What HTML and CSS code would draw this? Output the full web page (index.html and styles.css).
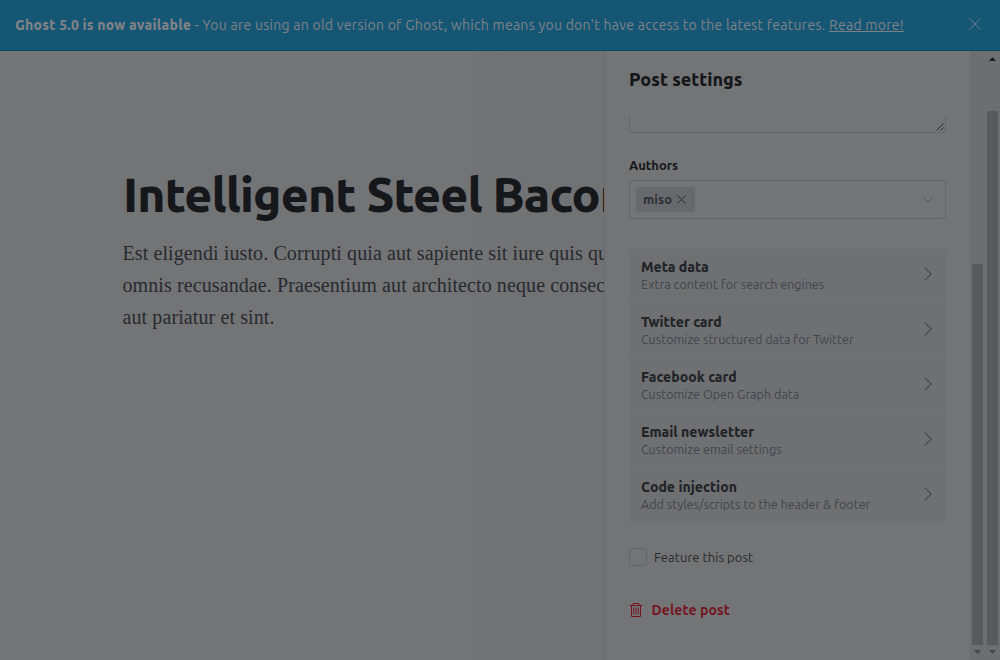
FILE: index.html
```html
<!DOCTYPE html>
<html lang="en">
<head>
<meta charset="utf-8">
<title>Post settings</title>
<link rel="stylesheet" href="styles.css">
</head>
<body>
<div class="app">
  <header class="alert">
    <p class="alert-text"><strong>Ghost 5.0 is now available</strong> - You are using an old version of Ghost, which means you don't have access to the latest features. <a class="alert-link">Read more!</a></p>
    <svg class="alert-close" viewBox="0 0 12 12"><path d="M.3.3l11.4 11.4M11.7.3.3 11.7"/></svg>
  </header>
  <div class="workspace">
    <main class="editor">
      <h1 class="title">Intelligent Steel Bacon</h1>
      <p class="body-copy">Est eligendi iusto. Corrupti quia aut sapiente sit iure quis qu<br>omnis recusandae. Praesentium aut architecto neque consec<br>aut pariatur et sint.</p>
    </main>
    <aside class="settings">
      <h2 class="settings-title">Post settings</h2>
      <div class="textarea-end"><svg class="grip" viewBox="0 0 8 8"><path d="M.5 7.5l7-7M4.5 7.5l3-3"/></svg></div>
      <div class="field-label">Authors</div>
      <div class="select">
        <span class="token"><span class="token-name">miso</span><svg class="token-close" viewBox="0 0 9 9"><path d="M.4.4l8.2 8.2M8.6.4.4 8.6"/></svg></span>
        <svg class="caret" viewBox="0 0 10 6"><path d="M.5.5 5 5 9.5.5"/></svg>
      </div>
      <nav class="menu">
        <div class="item"><div><div class="item-name">Meta data</div><div class="item-desc">Extra content for search engines</div></div><svg class="chevron" viewBox="0 0 8 14"><path d="M.7.6 7.2 7 .7 13.4"/></svg></div>
        <div class="item"><div><div class="item-name">Twitter card</div><div class="item-desc">Customize structured data for Twitter</div></div><svg class="chevron" viewBox="0 0 8 14"><path d="M.7.6 7.2 7 .7 13.4"/></svg></div>
        <div class="item"><div><div class="item-name">Facebook card</div><div class="item-desc">Customize Open Graph data</div></div><svg class="chevron" viewBox="0 0 8 14"><path d="M.7.6 7.2 7 .7 13.4"/></svg></div>
        <div class="item"><div><div class="item-name">Email newsletter</div><div class="item-desc">Customize email settings</div></div><svg class="chevron" viewBox="0 0 8 14"><path d="M.7.6 7.2 7 .7 13.4"/></svg></div>
        <div class="item"><div><div class="item-name">Code injection</div><div class="item-desc">Add styles/scripts to the header &amp; footer</div></div><svg class="chevron" viewBox="0 0 8 14"><path d="M.7.6 7.2 7 .7 13.4"/></svg></div>
      </nav>
      <div class="feature"><span class="checkbox"></span><span class="feature-text">Feature this post</span></div>
      <div class="delete"><svg class="trash" viewBox="0 0 14 14"><path d="M.5 2.5h13M4 2.3V.5h6v1.8M2.5 2.7v10.8h9V2.7M4.7 4.5v7M7 4.5v7M9.3 4.5v7"/></svg><span class="delete-text">Delete post</span></div>
    </aside>
    <div class="scrollbar inner"><div class="thumb"></div><svg class="arrow" viewBox="0 0 7 4"><path d="M0 0h7L3.5 4z"/></svg></div>
    <div class="scrollbar outer"><svg class="arrow up" viewBox="0 0 7 4"><path d="M0 4h7L3.5 0z"/></svg><div class="thumb"></div><svg class="arrow" viewBox="0 0 7 4"><path d="M0 0h7L3.5 4z"/></svg></div>
  </div>
</div>
</body>
</html>
```
FILE: styles.css
```css
* { box-sizing: border-box; }
body { margin: 0; background: #737476; font-family: Ubuntu, "Noto Sans", sans-serif; color: #15171a; }
h1, h2, p { margin: 0; }
svg { fill: none; flex: none; display: block; }
.app { width: 1000px; height: 660px; display: flex; flex-direction: column; overflow: hidden; }
.alert { height: 51px; flex: none; display: flex; align-items: center; justify-content: space-between; padding: 0 19px 2px 15px; background: #155675; border-bottom: 1px solid #0b4a67; color: #808285; }
.alert-text { padding-top: 2px; font-size: 14px; line-height: 20px; font-weight: 430; letter-spacing: .27px; white-space: nowrap; }
.alert-text strong { font-weight: 800; letter-spacing: .2px; }
.alert-link { text-decoration: underline; }
.alert-close { width: 12px; height: 12px; stroke: #77858e; stroke-width: .8; }
.workspace { flex: 1; min-height: 0; display: flex; }
.editor { width: 604px; flex: none; padding: 112px 0 0 123px; overflow: hidden; white-space: nowrap; background: linear-gradient(90deg, #737476 460px, #717274 530px, #717274 604px); }
.title { font-size: 48px; line-height: 62px; font-weight: 800; letter-spacing: -.85px; color: #15171a; }
.body-copy { margin: 12px 0 0 -.5px; font-family: "Liberation Serif", serif; font-size: 20px; line-height: 32px; letter-spacing: .1px; color: #272a2f; }
.settings { width: 366px; flex: none; border-left: 1px solid #696a6d; padding: 16px 24px 0; white-space: nowrap; }
.settings-title { font-size: 18px; line-height: 24px; font-weight: 800; letter-spacing: -.03px; }
.textarea-end { height: 17px; margin-top: 25px; border: 1px solid #646669; border-top: 0; border-radius: 0 0 3px 3px; display: flex; justify-content: flex-end; align-items: flex-end; padding: 0 1px 1px 0; }
.grip { width: 8px; height: 8px; stroke: #26282b; stroke-width: 1; }
.field-label { margin-top: 22px; font-size: 13px; line-height: 20px; font-weight: 600; }
.select { margin-top: 5px; height: 39px; border: 1px solid #646669; border-radius: 3px; display: flex; align-items: center; justify-content: space-between; padding: 0 12px 0 6px; }
.token { width: 59px; height: 25px; display: flex; align-items: center; gap: 5px; padding-left: 7px; background: #67696d; border-radius: 3px; font-size: 13px; font-weight: 600; letter-spacing: .1px; color: #2c2f34; }
.token-name { padding-bottom: 2px; }
.token-close { width: 9px; height: 9px; stroke: #292c30; }
.caret { width: 10px; height: 6px; stroke: #4f5256; }
.menu { width: 317px; margin-top: 30px; background: #6f7072; border-radius: 4px; }
.item { height: 55px; display: flex; justify-content: space-between; padding: 9px 14px 0 12px; border-bottom: 1px solid #737476; }
.item:last-child { height: 54px; border: 0; }
.item-name { font-size: 14px; line-height: 18px; font-weight: 800; letter-spacing: 0; color: #212429; }
.item-desc { font-size: 12.5px; line-height: 17px; letter-spacing: .04px; color: #40464e; }
.chevron { width: 8px; height: 14px; margin-top: 9px; stroke: #444a52; stroke-width: 1.1; }
.feature { margin-top: 24px; height: 20px; display: flex; align-items: center; gap: 7px; font-size: 13px; letter-spacing: .04px; color: #272a2f; }
.checkbox { width: 18px; height: 18px; border: 1px solid #62656a; border-radius: 3px; }
.delete { margin-top: 32px; height: 22px; display: flex; align-items: center; gap: 8.5px; color: #741421; font-size: 14px; font-weight: 600; letter-spacing: .1px; }
.trash { width: 14px; height: 14px; stroke: #741421; stroke-width: 1; }
.scrollbar { width: 15px; flex: none; display: flex; flex-direction: column; align-items: center; background: #6d6e70; }
.thumb { width: 11px; background: #595a5c; }
.inner .thumb { height: 381px; margin-top: 213px; }
.outer .thumb { height: 534px; margin-top: 50px; }
.arrow { width: 7px; height: 4px; margin-top: 5px; fill: #454648; }
.up { margin-top: 6px; fill: #1f2022; }
```
